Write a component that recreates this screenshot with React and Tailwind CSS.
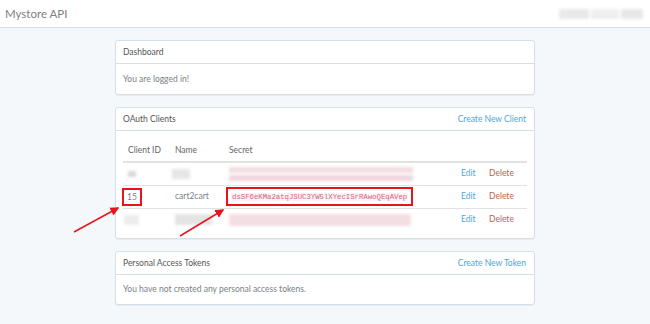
import React from "react";

const font = { fontFamily: "Lato, 'Open Sans', sans-serif" };

function Panel({ title, action, children }) {
  return (
    <div className="bg-white border border-[#d3e0e9] rounded-[3px] shadow-[0_1px_1px_rgba(0,0,0,0.05)]">
      <div className="h-[23px] pl-[7px] pr-[8px] flex items-center justify-between border-b border-[#d3e0e9] text-[8.5px] text-[#555]">
        <span>{title}</span>
        {action && <span className="text-[#4ea6dc]">{action}</span>}
      </div>
      {children}
    </div>
  );
}

function Blur({ className }) {
  return <div className={`blur-[1.5px] ${className}`} />;
}

function Row({ id, name, secret }) {
  return (
    <tr className="h-[23px] border-t border-[#e2e2e2]">
      <td className="pl-[5px] align-middle">{id}</td>
      <td className="pl-[5px] align-middle">{name}</td>
      <td className="pl-[5px] align-middle">{secret}</td>
      <td className="pl-[5px] align-middle text-[#4ea6dc]">Edit</td>
      <td className="pl-[5px] align-middle text-[#c2604e]">Delete</td>
    </tr>
  );
}

export default function App() {
  return (
    <div className="relative min-h-[324px] bg-[#f5f8fa] text-[#7a8186]" style={font}>
      <nav className="h-[28px] bg-white border-b border-[#d3e0e9] flex items-center justify-between pl-[5px] pr-[7px]">
        <span className="text-[11.5px] text-[#808080]">Mystore API</span>
        <div className="flex gap-[2px] blur-[1.5px]">
          <div className="w-[30px] h-[10px] bg-[#e9e9e9]" />
          <div className="w-[28px] h-[10px] bg-[#efefef]" />
          <div className="w-[22px] h-[10px] bg-[#e8e8e8]" />
        </div>
      </nav>

      <div className="w-[420px] mx-auto pt-[12px] flex flex-col gap-[12px]">
        <Panel title="Dashboard">
          <div className="h-[30px] px-[7px] flex items-center text-[8.5px]">You are logged in!</div>
        </Panel>

        <Panel title="OAuth Clients" action="Create New Client">
          <div className="px-[7px] pt-[9px] pb-[7px]">
            <table className="w-full text-[8.5px] text-left border-collapse">
              <colgroup>
                <col className="w-[47px]" />
                <col className="w-[54px]" />
                <col className="w-[232px]" />
                <col className="w-[28px]" />
                <col />
              </colgroup>
              <thead>
                <tr className="h-[22px] border-b-2 border-[#e2e2e2] text-[#666]">
                  <th className="pl-[5px] font-normal">Client ID</th>
                  <th className="pl-[5px] font-normal">Name</th>
                  <th className="pl-[5px] font-normal">Secret</th>
                  <th />
                  <th />
                </tr>
              </thead>
              <tbody>
                <Row
                  id={<Blur className="w-[8px] h-[6px] bg-[#d8d8d8]" />}
                  name={<Blur className="w-[18px] h-[10px] bg-[#e6e6e6] -ml-[3px]" />}
                  secret={
                    <div className="flex flex-col gap-[2px]">
                      <Blur className="w-[184px] h-[6px] bg-[#f3dde2]" />
                      <Blur className="w-[184px] h-[6px] bg-[#f0d6dc]" />
                    </div>
                  }
                />
                <Row
                  id={
                    <span className="inline-block -ml-[6px] border-2 border-[#e8141c] px-[3px] leading-[14px]">15</span>
                  }
                  name="cart2cart"
                  secret={
                    <span className="inline-block -ml-[3px] border-2 border-[#e8141c] px-[3px] py-[2px] leading-[10px]">
                      <code
                        className="text-[7.3px] text-[#d65f80] bg-[#fbf3f5] px-[1px]"
                        style={{ fontFamily: "'Liberation Mono', monospace" }}
                      >
                        dsSF6eKMa2atqJSUC3YW5lXYecISrRAwoQEqAVep
                      </code>
                    </span>
                  }
                />
                <Row
                  id={<Blur className="w-[15px] h-[10px] bg-[#ededed] -ml-[4px]" />}
                  name={<Blur className="w-[37px] h-[11px] bg-[#e4e4e4]" />}
                  secret={<Blur className="w-[182px] h-[12px] bg-[#f3dee3]" />}
                />
              </tbody>
            </table>
          </div>
        </Panel>

        <Panel title="Personal Access Tokens" action="Create New Token">
          <div className="h-[29px] px-[7px] flex items-center text-[8.5px]">
            You have not created any personal access tokens.
          </div>
        </Panel>
      </div>

      <svg className="absolute left-0 top-0 pointer-events-none" width="650" height="324">
        <defs>
          <marker id="ah" markerWidth="6" markerHeight="6" refX="5" refY="3" orient="auto">
            <path d="M0,0 L6,3 L0,6 Z" fill="#e8141c" />
          </marker>
        </defs>
        <line x1="74" y1="232" x2="118" y2="208" stroke="#e8141c" strokeWidth="1.5" markerEnd="url(#ah)" />
        <line x1="180" y1="236" x2="223" y2="210" stroke="#e8141c" strokeWidth="1.5" markerEnd="url(#ah)" />
      </svg>
    </div>
  );
}
